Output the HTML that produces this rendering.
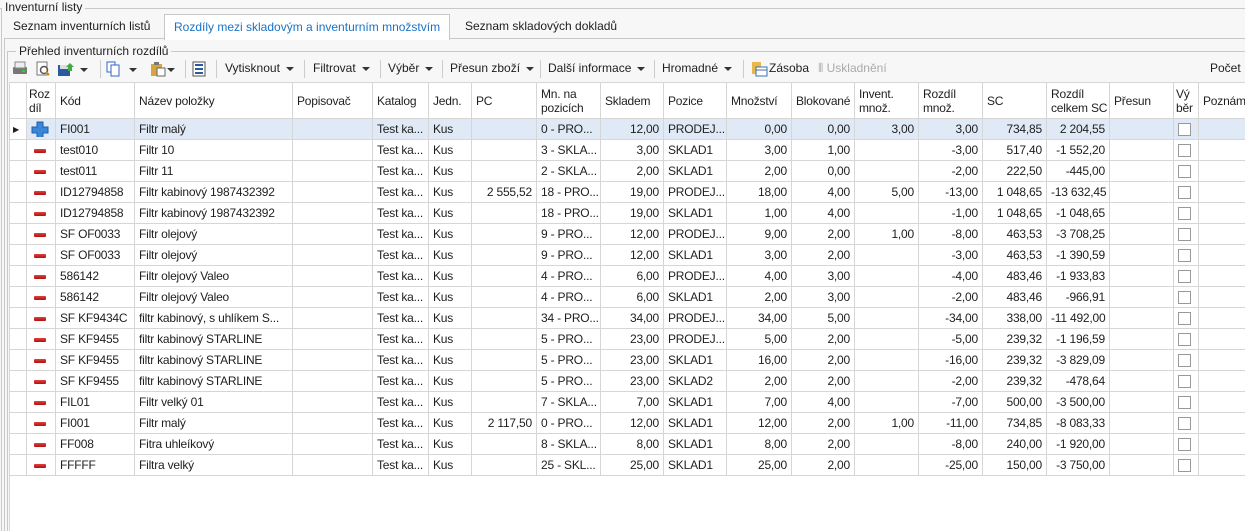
<!DOCTYPE html>
<html><head><meta charset="utf-8"><style>
*{box-sizing:border-box;margin:0;padding:0}
body{width:1245px;height:531px;overflow:hidden;background:#f7f7f7;font-family:"Liberation Sans",sans-serif;font-size:12px;color:#1e1e1e;position:relative}
.abs{position:absolute;white-space:nowrap}
.hl{position:absolute;height:1px;background:#c8c8c8}
.vl{position:absolute;width:1px;background:#c8c8c8}
.tab{position:absolute;top:14px;height:25px;line-height:24px;padding:0 9px;font-size:12px;white-space:nowrap}
.tb{position:absolute;top:61px;font-size:12px;white-space:nowrap}
.sep{position:absolute;top:60px;width:1px;height:18px;background:#ccc}
.arr{display:inline-block;width:0;height:0;border-left:4px solid transparent;border-right:4px solid transparent;border-top:4px solid #333;vertical-align:middle;margin-left:6px}
table{position:absolute;left:9px;top:82px;width:1249px;border-collapse:collapse;table-layout:fixed;background:#fff}
td,th{border:1px solid #d6d6d6;height:21px;padding:0 4px;white-space:nowrap;overflow:hidden;font-weight:normal;text-align:left;font-size:12px;letter-spacing:-0.2px}
th{height:36px;line-height:14px;vertical-align:middle;background:#fff}
td.r{text-align:right}
tr.sel td{background:#dfeaf6}
.mi{display:inline-block;width:12px;height:4px;background:linear-gradient(#e04040,#b01010);border-radius:1px;margin-left:3px;vertical-align:middle}
.cb{display:inline-block;width:13px;height:13px;border:1px solid #999;background:#fff;vertical-align:middle}
</style></head><body>
<div class="hl" style="left:0;top:8px;width:1245px"></div>
<div class="abs" style="left:2px;top:0;background:#f7f7f7;padding:0 3px;font-size:12px">Inventurní listy</div>
<div class="vl" style="left:1px;top:8px;height:523px"></div>
<div class="vl" style="left:4px;top:38px;height:493px"></div>
<div class="hl" style="left:4px;top:38px;width:1241px"></div>
<div class="tab" style="left:4px">Seznam inventurních listů</div>
<div class="tab" style="left:164px;background:#fff;border:1px solid #c8c8c8;border-bottom:none;color:#1a73c5;height:26px">Rozdíly mezi skladovým a inventurním množstvím</div>
<div class="tab" style="left:456px">Seznam skladových dokladů</div>
<div class="hl" style="left:7px;top:51px;width:1238px"></div>
<div class="vl" style="left:7px;top:51px;height:480px"></div>
<div class="abs" style="left:16px;top:44px;background:#f7f7f7;padding:0 3px">Přehled inventurních rozdílů</div>
<svg class="abs" style="left:12px;top:61px" width="200" height="16">
<rect x="1" y="6" width="14" height="7" rx="1" fill="#777"/><rect x="3" y="1" width="10" height="6" fill="#eee" stroke="#888"/><rect x="10" y="9" width="3" height="2" fill="#3c3"/>
<rect x="25" y="1" width="10" height="13" fill="#fff" stroke="#777"/><circle cx="32" cy="9" r="3.5" fill="none" stroke="#555" stroke-width="1.5"/><line x1="34" y1="11" x2="37" y2="14" stroke="#c80" stroke-width="2"/>
<rect x="46" y="4" width="12" height="11" fill="#2a5aa0"/><rect x="48" y="4" width="8" height="4" fill="#ddd"/><path d="M54 6 L58 2 L62 6 L60 6 L60 10 L56 10 L56 6Z" fill="#4a4"/>
<path d="M68 7 l8 0 l-4 4z" fill="#333"/>
<rect x="95" y="1" width="8" height="10" fill="#fff" stroke="#36c"/><rect x="99" y="4" width="8" height="11" fill="#fff" stroke="#36c"/>
<path d="M117 7 l8 0 l-4 4z" fill="#333"/>
<rect x="139" y="3" width="11" height="12" fill="#d9a441"/><rect x="142" y="1" width="5" height="3" fill="#777"/><rect x="145" y="7" width="8" height="8" fill="#fff" stroke="#666"/>
<path d="M155 7 l8 0 l-4 4z" fill="#333"/>
<rect x="181" y="1" width="12" height="14" fill="#fff" stroke="#555"/><rect x="183" y="3" width="8" height="2" fill="#2a5aa0"/><rect x="183" y="7" width="8" height="2" fill="#2a5aa0"/><rect x="183" y="11" width="8" height="2" fill="#2a5aa0"/>
</svg>
<div class="sep" style="left:100px"></div><div class="sep" style="left:185px"></div><div class="sep" style="left:216px"></div>
<div class="tb" style="left:225px">Vytisknout<span class="arr"></span></div>
<div class="sep" style="left:304px"></div>
<div class="tb" style="left:313px">Filtrovat<span class="arr"></span></div>
<div class="sep" style="left:380px"></div>
<div class="tb" style="left:388px">Výběr<span class="arr"></span></div>
<div class="sep" style="left:442px"></div>
<div class="tb" style="left:450px">Přesun zboží<span class="arr"></span></div>
<div class="sep" style="left:540px"></div>
<div class="tb" style="left:548px">Další informace<span class="arr"></span></div>
<div class="sep" style="left:654px"></div>
<div class="tb" style="left:662px">Hromadné<span class="arr"></span></div>
<div class="sep" style="left:743px"></div>
<svg class="abs" style="left:751px;top:61px" width="17" height="16"><rect x="1" y="1" width="9" height="12" fill="#e8b84a"/><rect x="5" y="6" width="11" height="9" fill="#fff" stroke="#3a6fb0"/><line x1="5" y1="9" x2="16" y2="9" stroke="#3a6fb0"/></svg>
<div class="tb" style="left:769px">Zásoba</div>
<div class="tb" style="left:818px;color:#aaa">⦀ Uskladnění</div>
<div class="tb" style="left:1210px">Počet :</div>
<table>
<colgroup><col style="width:17px"><col style="width:29px"><col style="width:79px"><col style="width:158px"><col style="width:80px"><col style="width:56px"><col style="width:43px"><col style="width:65px"><col style="width:64px"><col style="width:63px"><col style="width:63px"><col style="width:65px"><col style="width:63px"><col style="width:64px"><col style="width:64px"><col style="width:64px"><col style="width:63px"><col style="width:64px"><col style="width:25px"><col style="width:60px"></colgroup>
<tr><th></th><th style="padding:0 2px">Roz<br>díl</th><th>Kód</th><th>Název položky</th><th>Popisovač</th><th>Katalog</th><th>Jedn.</th><th>PC</th><th>Mn. na<br>pozicích</th><th>Skladem</th><th>Pozice</th><th>Množství</th><th>Blokované</th><th>Invent.<br>množ.</th><th>Rozdíl<br>množ.</th><th>SC</th><th>Rozdíl<br>celkem SC</th><th>Přesun</th><th style="padding:0 2px">Vý<br>běr</th><th>Poznám</th></tr>
<tr class="sel"><td style="background:#fff;font-size:8px;padding:0 3px">▶</td><td><svg width="18" height="16" style="vertical-align:middle"><path d="M6 1h6v5h5v6h-5v5h-6v-5h-5v-6h5z" fill="#3a86d8" stroke="#1f5fa8"/></svg></td><td>FI001</td><td>Filtr malý</td><td></td><td>Test ka...</td><td>Kus</td><td></td><td>0 - PRO...</td><td class="r">12,00</td><td>PRODEJ...</td><td class="r">0,00</td><td class="r">0,00</td><td class="r">3,00</td><td class="r">3,00</td><td class="r">734,85</td><td class="r">2 204,55</td><td></td><td><span class="cb"></span></td><td></td></tr>
<tr><td></td><td><span class="mi"></span></td><td>test010</td><td>Filtr 10</td><td></td><td>Test ka...</td><td>Kus</td><td></td><td>3 - SKLA...</td><td class="r">3,00</td><td>SKLAD1</td><td class="r">3,00</td><td class="r">1,00</td><td></td><td class="r">-3,00</td><td class="r">517,40</td><td class="r">-1 552,20</td><td></td><td><span class="cb"></span></td><td></td></tr>
<tr><td></td><td><span class="mi"></span></td><td>test011</td><td>Filtr 11</td><td></td><td>Test ka...</td><td>Kus</td><td></td><td>2 - SKLA...</td><td class="r">2,00</td><td>SKLAD1</td><td class="r">2,00</td><td class="r">0,00</td><td></td><td class="r">-2,00</td><td class="r">222,50</td><td class="r">-445,00</td><td></td><td><span class="cb"></span></td><td></td></tr>
<tr><td></td><td><span class="mi"></span></td><td>ID12794858</td><td>Filtr kabinový 1987432392</td><td></td><td>Test ka...</td><td>Kus</td><td class="r">2 555,52</td><td>18 - PRO...</td><td class="r">19,00</td><td>PRODEJ...</td><td class="r">18,00</td><td class="r">4,00</td><td class="r">5,00</td><td class="r">-13,00</td><td class="r">1 048,65</td><td class="r">-13 632,45</td><td></td><td><span class="cb"></span></td><td></td></tr>
<tr><td></td><td><span class="mi"></span></td><td>ID12794858</td><td>Filtr kabinový 1987432392</td><td></td><td>Test ka...</td><td>Kus</td><td></td><td>18 - PRO...</td><td class="r">19,00</td><td>SKLAD1</td><td class="r">1,00</td><td class="r">4,00</td><td></td><td class="r">-1,00</td><td class="r">1 048,65</td><td class="r">-1 048,65</td><td></td><td><span class="cb"></span></td><td></td></tr>
<tr><td></td><td><span class="mi"></span></td><td>SF OF0033</td><td>Filtr olejový</td><td></td><td>Test ka...</td><td>Kus</td><td></td><td>9 - PRO...</td><td class="r">12,00</td><td>PRODEJ...</td><td class="r">9,00</td><td class="r">2,00</td><td class="r">1,00</td><td class="r">-8,00</td><td class="r">463,53</td><td class="r">-3 708,25</td><td></td><td><span class="cb"></span></td><td></td></tr>
<tr><td></td><td><span class="mi"></span></td><td>SF OF0033</td><td>Filtr olejový</td><td></td><td>Test ka...</td><td>Kus</td><td></td><td>9 - PRO...</td><td class="r">12,00</td><td>SKLAD1</td><td class="r">3,00</td><td class="r">2,00</td><td></td><td class="r">-3,00</td><td class="r">463,53</td><td class="r">-1 390,59</td><td></td><td><span class="cb"></span></td><td></td></tr>
<tr><td></td><td><span class="mi"></span></td><td>586142</td><td>Filtr olejový Valeo</td><td></td><td>Test ka...</td><td>Kus</td><td></td><td>4 - PRO...</td><td class="r">6,00</td><td>PRODEJ...</td><td class="r">4,00</td><td class="r">3,00</td><td></td><td class="r">-4,00</td><td class="r">483,46</td><td class="r">-1 933,83</td><td></td><td><span class="cb"></span></td><td></td></tr>
<tr><td></td><td><span class="mi"></span></td><td>586142</td><td>Filtr olejový Valeo</td><td></td><td>Test ka...</td><td>Kus</td><td></td><td>4 - PRO...</td><td class="r">6,00</td><td>SKLAD1</td><td class="r">2,00</td><td class="r">3,00</td><td></td><td class="r">-2,00</td><td class="r">483,46</td><td class="r">-966,91</td><td></td><td><span class="cb"></span></td><td></td></tr>
<tr><td></td><td><span class="mi"></span></td><td>SF KF9434C</td><td>filtr kabinový, s uhlíkem S...</td><td></td><td>Test ka...</td><td>Kus</td><td></td><td>34 - PRO...</td><td class="r">34,00</td><td>PRODEJ...</td><td class="r">34,00</td><td class="r">5,00</td><td></td><td class="r">-34,00</td><td class="r">338,00</td><td class="r">-11 492,00</td><td></td><td><span class="cb"></span></td><td></td></tr>
<tr><td></td><td><span class="mi"></span></td><td>SF KF9455</td><td>filtr kabinový STARLINE</td><td></td><td>Test ka...</td><td>Kus</td><td></td><td>5 - PRO...</td><td class="r">23,00</td><td>PRODEJ...</td><td class="r">5,00</td><td class="r">2,00</td><td></td><td class="r">-5,00</td><td class="r">239,32</td><td class="r">-1 196,59</td><td></td><td><span class="cb"></span></td><td></td></tr>
<tr><td></td><td><span class="mi"></span></td><td>SF KF9455</td><td>filtr kabinový STARLINE</td><td></td><td>Test ka...</td><td>Kus</td><td></td><td>5 - PRO...</td><td class="r">23,00</td><td>SKLAD1</td><td class="r">16,00</td><td class="r">2,00</td><td></td><td class="r">-16,00</td><td class="r">239,32</td><td class="r">-3 829,09</td><td></td><td><span class="cb"></span></td><td></td></tr>
<tr><td></td><td><span class="mi"></span></td><td>SF KF9455</td><td>filtr kabinový STARLINE</td><td></td><td>Test ka...</td><td>Kus</td><td></td><td>5 - PRO...</td><td class="r">23,00</td><td>SKLAD2</td><td class="r">2,00</td><td class="r">2,00</td><td></td><td class="r">-2,00</td><td class="r">239,32</td><td class="r">-478,64</td><td></td><td><span class="cb"></span></td><td></td></tr>
<tr><td></td><td><span class="mi"></span></td><td>FIL01</td><td>Filtr velký 01</td><td></td><td>Test ka...</td><td>Kus</td><td></td><td>7 - SKLA...</td><td class="r">7,00</td><td>SKLAD1</td><td class="r">7,00</td><td class="r">4,00</td><td></td><td class="r">-7,00</td><td class="r">500,00</td><td class="r">-3 500,00</td><td></td><td><span class="cb"></span></td><td></td></tr>
<tr><td></td><td><span class="mi"></span></td><td>FI001</td><td>Filtr malý</td><td></td><td>Test ka...</td><td>Kus</td><td class="r">2 117,50</td><td>0 - PRO...</td><td class="r">12,00</td><td>SKLAD1</td><td class="r">12,00</td><td class="r">2,00</td><td class="r">1,00</td><td class="r">-11,00</td><td class="r">734,85</td><td class="r">-8 083,33</td><td></td><td><span class="cb"></span></td><td></td></tr>
<tr><td></td><td><span class="mi"></span></td><td>FF008</td><td>Fitra uhleíkový</td><td></td><td>Test ka...</td><td>Kus</td><td></td><td>8 - SKLA...</td><td class="r">8,00</td><td>SKLAD1</td><td class="r">8,00</td><td class="r">2,00</td><td></td><td class="r">-8,00</td><td class="r">240,00</td><td class="r">-1 920,00</td><td></td><td><span class="cb"></span></td><td></td></tr>
<tr><td></td><td><span class="mi"></span></td><td>FFFFF</td><td>Filtra velký</td><td></td><td>Test ka...</td><td>Kus</td><td></td><td>25 - SKL...</td><td class="r">25,00</td><td>SKLAD1</td><td class="r">25,00</td><td class="r">2,00</td><td></td><td class="r">-25,00</td><td class="r">150,00</td><td class="r">-3 750,00</td><td></td><td><span class="cb"></span></td><td></td></tr>
</table>
<div class="abs" style="left:9px;top:476px;width:1236px;height:55px;background:#fff;border-left:1px solid #d6d6d6"></div>
</body></html>
